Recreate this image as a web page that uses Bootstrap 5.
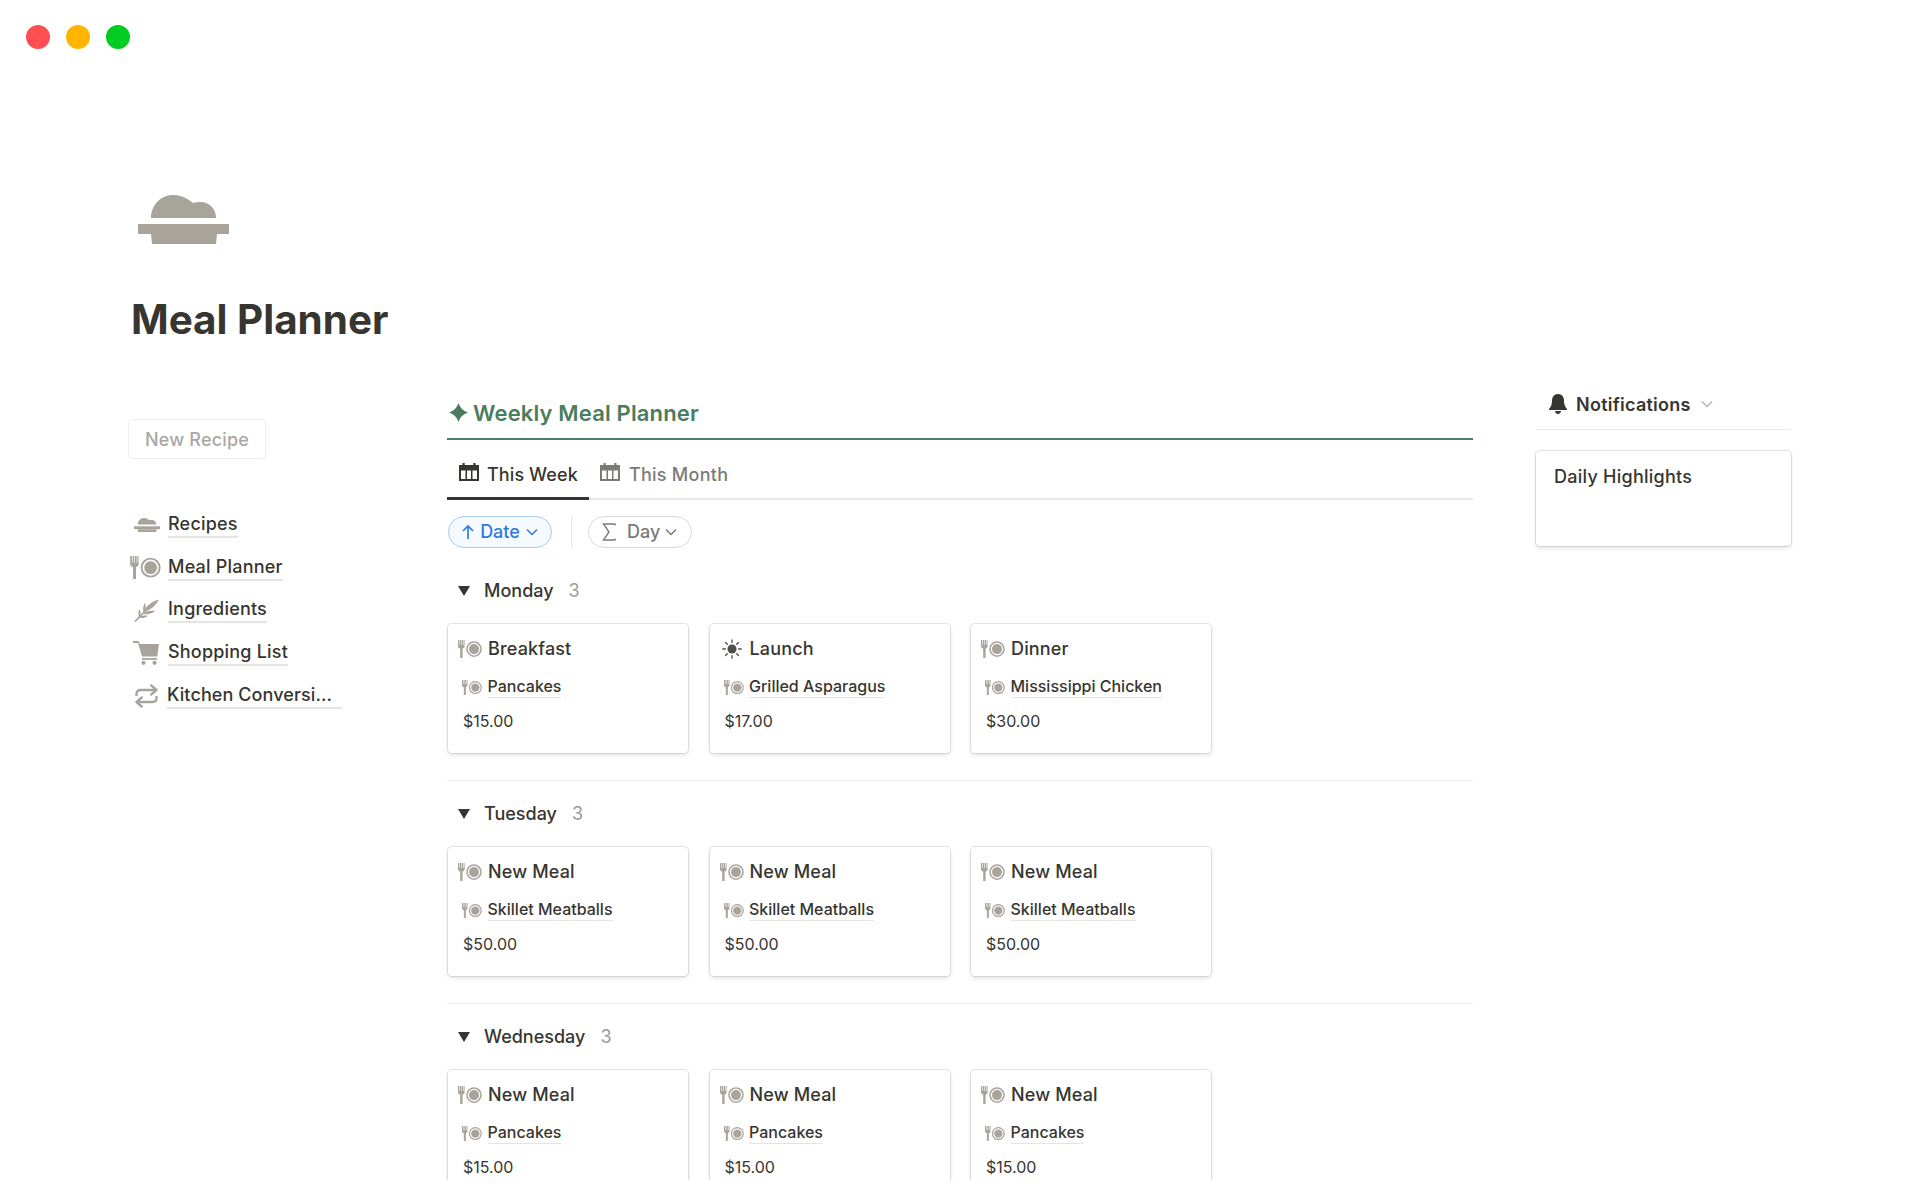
<!DOCTYPE html>
<html lang="en"><head><meta charset="utf-8"><title>Meal Planner</title>
<link href="https://cdn.jsdelivr.net/npm/bootstrap@5.3.0/dist/css/bootstrap.min.css" rel="stylesheet">
<style>
html,body{height:1200px;overflow:hidden}
body{font-family:Inter,"Liberation Sans",sans-serif;color:#37352f;background:#fff}
.tl-bar{height:74px;padding:25px 0 0 26px;gap:16px}
.tl-dot{width:24px;height:24px;border-radius:50%}
.tl-r{background:#ff4f52}.tl-y{background:#ffb400}.tl-g{background:#00cc22}
.pg{padding:0 128px;height:1106px;overflow:hidden}
.hero-ic{padding:121px 0 0 10px;line-height:0;color:#a8a49b}
.hero-ic svg{width:91px;height:49px;display:block}
.pg-title{font-size:40.4px;font-weight:700;line-height:48px;margin:52px 0 0 3px}
.cols{margin-top:53px}
.side-col{width:319px;flex:none;padding-top:22px}
.main-col{width:1026px;flex:none}
.right-col{width:255px;flex:none;margin-left:63px}
.new-btn{width:138px;height:40px;border:1px solid #eeedeb;border-radius:4px;color:#a9a8a5;font-size:18px;letter-spacing:.2px;font-weight:500;background:#fff;padding:0;box-shadow:0 1px 1px rgba(0,0,0,.02)}
.side-nav{margin-top:45px}
.side-item{height:42.6px;gap:6px}
.ic-box{width:32px;height:28px;flex:none;margin-left:2px;color:#a8a49b;display:flex;align-items:center}
.ic-dish svg{width:26px;height:14px;margin-left:4px}
.ic-plate svg{width:31px;height:23px}
.ic-herb svg{width:25px;height:23px;margin-left:4px}
.ic-cart svg{width:26px;height:24px;margin-left:3px}
.ic-swap svg{width:23px;height:24px;margin-left:5px}
.nav-txt{font-size:18px;letter-spacing:.2px;font-weight:500;line-height:24px;border-bottom:2px solid #e5e4e1;color:#37352f}
.nav-long{padding-right:10px;margin-left:-1px;letter-spacing:.1px}
.sec-head{color:#4a7d5d;font-size:22px;letter-spacing:.15px;font-weight:600;line-height:32px;height:43px;border-bottom:2px solid #4a7d5d;padding-left:2px;gap:5px}
.sec-head svg{width:19px;height:19px;margin-top:6px}
.tab-row{height:60px;border-bottom:2px solid #e8e7e4}
.tab-it{height:60px;padding:11px 11px 0 11px;gap:9px;font-size:18px;letter-spacing:.25px;font-weight:500;color:#7b7a75;border-bottom:3px solid transparent}
.tab-it.on{color:#37352f;border-bottom-color:#37352f;width:142px;padding-left:12px;padding-right:0;gap:8px;letter-spacing:.1px}
.tab-it svg{width:20px;height:18px;margin-top:-4px}
.pill-row{margin-top:15px;height:33px;padding-left:1px}
.pill-a{width:104px;height:32px;border:1.5px solid #a9cdf3;background:#f5faff;color:#2f7be0;border-radius:16px;font-size:18px;font-weight:500;gap:6px}
.pill-b{width:104px;height:32px;border:1.5px solid #dcdbd8;background:#fff;color:#7b7a75;border-radius:16px;font-size:18px;font-weight:500;gap:5px;padding-left:13px}
.day-lbl{margin-left:6px}
.pill-sep{width:1px;height:32px;background:#e8e7e4;margin:0 16px 0 19px}
.grp{height:223px}
.grp+.grp{border-top:1px solid #e8e7e4}
.grp-first{height:206px}
.g-head{height:33px;font-size:18px;font-weight:500;padding-left:11px}
.g-mt{margin-top:16px}
.tri{width:0;height:0;border-left:6px solid transparent;border-right:6px solid transparent;border-top:10px solid #37352f;margin-right:14px}
.g-count{color:#9b9a97;margin-left:15px;font-weight:400}
.cards-row{gap:21.5px;margin:17px 0 0 1px}
.m-card{width:240px;height:129px;border-radius:4px;border:0;box-shadow:0 0 0 1px rgba(55,53,47,.12),0 2px 4px rgba(55,53,47,.14);padding:0;background:#fff;flex:none}
.m-title{height:26px;margin-top:12px;padding-left:10px;font-size:18px;letter-spacing:.15px;font-weight:500;line-height:26px}
.m-title svg{width:24px;height:18px;margin-right:6px;color:#a8a49b}
.m-title .sun{margin-left:2px;margin-right:8px;width:20px;height:20px;color:#4f4e4a}
.m-prop{margin-top:13px;padding-left:14px;height:24px;font-size:16px;font-weight:500}
.m-prop svg{width:20px;height:15px;margin-right:5.500px;color:#a8a49b}
.m-prop span{border-bottom:1px solid #e5e4e1;line-height:21px}
.m-price{padding-left:15px;margin-top:10px;font-size:16px;line-height:24px}
.nt-head{height:33px;border-bottom:1px solid #e8e7e4;font-size:18px;letter-spacing:.25px;font-weight:600;padding:0 0 18px 12px;margin-bottom:21px}
.nt-head svg{margin-right:8px;width:20px;height:20px}
.nt-head .nt-chev{margin-left:10px;width:12px;height:8px;margin-right:0;color:#b5b4b0}
.nt-card{height:95px;border-radius:4px;border:0;box-shadow:0 0 0 1px rgba(55,53,47,.14),0 2px 4px rgba(55,53,47,.14);padding:14px 0 0 18px;font-size:18px;letter-spacing:.25px;font-weight:500;background:#fff;line-height:24px}
</style></head><body>
<svg width="0" height="0" class="d-none position-absolute" aria-hidden="true"><defs>
<symbol id="i-dish" viewBox="0 0 91 49"><path fill="currentColor" d="M13 23C13 10 23 0 35 0c9 0 15 4 20 8 2-1 5-1 7-1 10 0 16 7 16 16z"/><rect y="29" width="91" height="10" fill="currentColor"/><path fill="currentColor" d="M13 39h66l-1 10H14z"/></symbol>
<symbol id="i-plate" viewBox="0 0 24 18"><path fill="currentColor" d="M0 0h1.300v5h.6V0h1.300v5h.6V0h1.300v5h.6V0h.9v6.200c0 1.300-1 2.100-2 2.400V18H2.200V8.600C1 8.300 0 7.500 0 6.200z"/><path fill="currentColor" fill-rule="evenodd" d="M16 1.300a7.800 7.800 0 1 1 0 15.600a7.800 7.800 0 0 1 0-15.600zm0 1.500a6.300 6.300 0 1 0 0 12.600a6.300 6.300 0 0 0 0-12.600z"/><circle cx="16" cy="9.100" r="5" fill="currentColor"/></symbol>
<symbol id="i-herb" viewBox="0 0 25 23"><path fill="none" stroke="currentColor" stroke-width="1.800" stroke-linecap="round" d="M1.500 22L13 10"/><path fill="currentColor" d="M11 10C14 6 18 2.500 24.500.5 23 5 19 9 13 12z"/><path fill="currentColor" d="M9.500 14c3-2 7-2.800 11.500-2-3 2.500-6.500 3.500-10.500 3.200z"/><path fill="currentColor" d="M9.500 13C8.800 10 9 7 10.800 4c1.300 3 1.200 6 0 8.800z"/><path fill="currentColor" d="M5 18c2.500-1.500 5.500-2 9-1.300-2.500 2-5 2.600-8.200 2.300z"/><path fill="currentColor" d="M5 17.500C4 15 4 12.500 5.500 10c1.200 2.500 1.200 5 .5 7.500z"/></symbol>
<symbol id="i-cart" viewBox="0 0 26 24"><path fill="currentColor" d="M0 0h5.500l1.200 3H26l-1.800 12.500H9L5 2H0z"/><path fill="none" stroke="currentColor" stroke-width="1.800" d="M9 18h15"/><circle cx="10.500" cy="21.800" r="2.100" fill="currentColor"/><circle cx="21.500" cy="21.800" r="2.100" fill="currentColor"/></symbol>
<symbol id="i-swap" viewBox="0 0 23 24"><g fill="none" stroke="currentColor" stroke-width="2.400" stroke-linejoin="round"><path d="M1.500 12v-2c0-2.500 1.500-4 4-4H21"/><path d="M15.500 .8L21.500 6l-6 5.200"/><path d="M21.500 12v2c0 2.500-1.500 4-4 4H2"/><path d="M7.500 12.800L1.500 18l6 5.200"/></g></symbol>
<symbol id="i-cal" viewBox="0 0 20 18"><path fill="currentColor" fill-rule="evenodd" d="M3.500 0h2.200v2h8.600V0h2.200v2H20v16H0V2h3.500zM2 7.500V16h4.500V7.500zm6 0V16h4V7.500zm5.500 0V16H18V7.500z"/></symbol>
<symbol id="i-sun" viewBox="0 0 20 20"><circle cx="10" cy="10" r="4.500" fill="currentColor"/><g stroke="currentColor" stroke-width="1.300" stroke-linecap="round"><path d="M10 .8v2.600M10 16.600v2.600M.8 10h2.600M16.600 10h2.600M3.500 3.500l1.800 1.800M14.700 14.700l1.800 1.800M3.500 16.500l1.800-1.800M14.700 5.300l1.800-1.800"/></g></symbol>
<symbol id="i-bell" viewBox="0 0 20 20"><path fill="currentColor" d="M10 0c4 0 6 3 6 7 0 3 1 6 3 8v1H1v-1c2-2 3-5 3-8 0-4 2-7 6-7z"/><path fill="currentColor" d="M7 17h6c-.3 1.800-1.500 3-3 3s-2.700-1.200-3-3z"/></symbol>
<symbol id="i-chev" viewBox="0 0 12 8"><path fill="none" stroke="currentColor" stroke-width="1.500" d="M1 1.500l5 5 5-5"/></symbol>
</defs></svg>

<div class="tl-bar d-flex"><div class="tl-dot tl-r"></div><div class="tl-dot tl-y"></div><div class="tl-dot tl-g"></div></div>

<div class="pg">
  <div class="hero-ic"><svg><use href="#i-dish"/></svg></div>
  <h1 class="pg-title">Meal Planner</h1>
  <div class="cols d-flex align-items-start">
    <aside class="side-col">
      <button class="new-btn btn">New Recipe</button>
      <div class="side-nav">
        <div class="side-item d-flex align-items-center"><span class="ic-box ic-dish"><svg><use href="#i-dish"/></svg></span><span class="nav-txt">Recipes</span></div>
        <div class="side-item d-flex align-items-center"><span class="ic-box ic-plate"><svg><use href="#i-plate"/></svg></span><span class="nav-txt">Meal Planner</span></div>
        <div class="side-item d-flex align-items-center"><span class="ic-box ic-herb"><svg><use href="#i-herb"/></svg></span><span class="nav-txt">Ingredients</span></div>
        <div class="side-item d-flex align-items-center"><span class="ic-box ic-cart"><svg><use href="#i-cart"/></svg></span><span class="nav-txt">Shopping List</span></div>
        <div class="side-item d-flex align-items-center"><span class="ic-box ic-swap"><svg><use href="#i-swap"/></svg></span><span class="nav-txt nav-long">Kitchen Conversi...</span></div>
      </div>
    </aside>
    <main class="main-col">
      <div class="sec-head d-flex align-items-start"><svg viewBox="0 0 20 20"><path fill="currentColor" d="M10 0C11.500 5 15 8.500 20 10 15 11.500 11.500 15 10 20 8.500 15 5 11.500 0 10 5 8.500 8.500 5 10 0z"/></svg><span>Weekly Meal Planner</span></div>
      <div class="tab-row d-flex">
        <div class="tab-it on d-flex align-items-center"><svg><use href="#i-cal"/></svg>This Week</div>
        <div class="tab-it d-flex align-items-center"><svg><use href="#i-cal"/></svg>This Month</div>
      </div>
      <div class="pill-row d-flex align-items-center">
        <div class="pill-a d-flex align-items-center justify-content-center"><svg width="12" height="16" viewBox="0 0 12 16"><path fill="none" stroke="currentColor" stroke-width="1.700" d="M6 15V2M1 7l5-5 5 5"/></svg>Date<svg width="12" height="8"><use href="#i-chev"/></svg></div>
        <div class="pill-sep"></div>
        <div class="pill-b d-flex align-items-center"><svg width="14" height="18" viewBox="0 0 14 18"><path fill="none" stroke="currentColor" stroke-width="1.400" d="M13 2.500V1H1.500L7 9l-5.500 8H13v-1.500"/></svg><span class="day-lbl">Day</span><svg width="12" height="8"><use href="#i-chev"/></svg></div>
      </div>
      <div style="height:26px"></div>
      <section class="grp grp-first">
        <div class="g-head d-flex align-items-center"><span class="tri"></span>Monday<span class="g-count">3</span></div>
        <div class="cards-row d-flex">
          <div class="m-card card"><div class="m-title d-flex align-items-center"><svg><use href="#i-plate"/></svg>Breakfast</div><div class="m-prop d-flex align-items-center"><svg><use href="#i-plate"/></svg><span>Pancakes</span></div><div class="m-price">$15.00</div></div>
          <div class="m-card card"><div class="m-title d-flex align-items-center"><svg class="sun"><use href="#i-sun"/></svg>Launch</div><div class="m-prop d-flex align-items-center"><svg><use href="#i-plate"/></svg><span>Grilled Asparagus</span></div><div class="m-price">$17.00</div></div>
          <div class="m-card card"><div class="m-title d-flex align-items-center"><svg><use href="#i-plate"/></svg>Dinner</div><div class="m-prop d-flex align-items-center"><svg><use href="#i-plate"/></svg><span>Mississippi Chicken</span></div><div class="m-price">$30.00</div></div>
        </div>
      </section>
      <section class="grp">
        <div class="g-head g-mt d-flex align-items-center"><span class="tri"></span>Tuesday<span class="g-count">3</span></div>
        <div class="cards-row d-flex">
          <div class="m-card card"><div class="m-title d-flex align-items-center"><svg><use href="#i-plate"/></svg>New Meal</div><div class="m-prop d-flex align-items-center"><svg><use href="#i-plate"/></svg><span>Skillet Meatballs</span></div><div class="m-price">$50.00</div></div>
          <div class="m-card card"><div class="m-title d-flex align-items-center"><svg><use href="#i-plate"/></svg>New Meal</div><div class="m-prop d-flex align-items-center"><svg><use href="#i-plate"/></svg><span>Skillet Meatballs</span></div><div class="m-price">$50.00</div></div>
          <div class="m-card card"><div class="m-title d-flex align-items-center"><svg><use href="#i-plate"/></svg>New Meal</div><div class="m-prop d-flex align-items-center"><svg><use href="#i-plate"/></svg><span>Skillet Meatballs</span></div><div class="m-price">$50.00</div></div>
        </div>
      </section>
      <section class="grp">
        <div class="g-head g-mt d-flex align-items-center"><span class="tri"></span>Wednesday<span class="g-count">3</span></div>
        <div class="cards-row d-flex">
          <div class="m-card card"><div class="m-title d-flex align-items-center"><svg><use href="#i-plate"/></svg>New Meal</div><div class="m-prop d-flex align-items-center"><svg><use href="#i-plate"/></svg><span>Pancakes</span></div><div class="m-price">$15.00</div></div>
          <div class="m-card card"><div class="m-title d-flex align-items-center"><svg><use href="#i-plate"/></svg>New Meal</div><div class="m-prop d-flex align-items-center"><svg><use href="#i-plate"/></svg><span>Pancakes</span></div><div class="m-price">$15.00</div></div>
          <div class="m-card card"><div class="m-title d-flex align-items-center"><svg><use href="#i-plate"/></svg>New Meal</div><div class="m-prop d-flex align-items-center"><svg><use href="#i-plate"/></svg><span>Pancakes</span></div><div class="m-price">$15.00</div></div>
        </div>
      </section>
    </main>
    <aside class="right-col">
      <div class="nt-head d-flex align-items-center"><svg><use href="#i-bell"/></svg>Notifications<svg class="nt-chev"><use href="#i-chev"/></svg></div>
      <div class="nt-card card">Daily Highlights</div>
    </aside>
  </div>
</div>
<script src="https://cdn.jsdelivr.net/npm/bootstrap@5.3.0/dist/js/bootstrap.bundle.min.js"></script>
</body></html>
